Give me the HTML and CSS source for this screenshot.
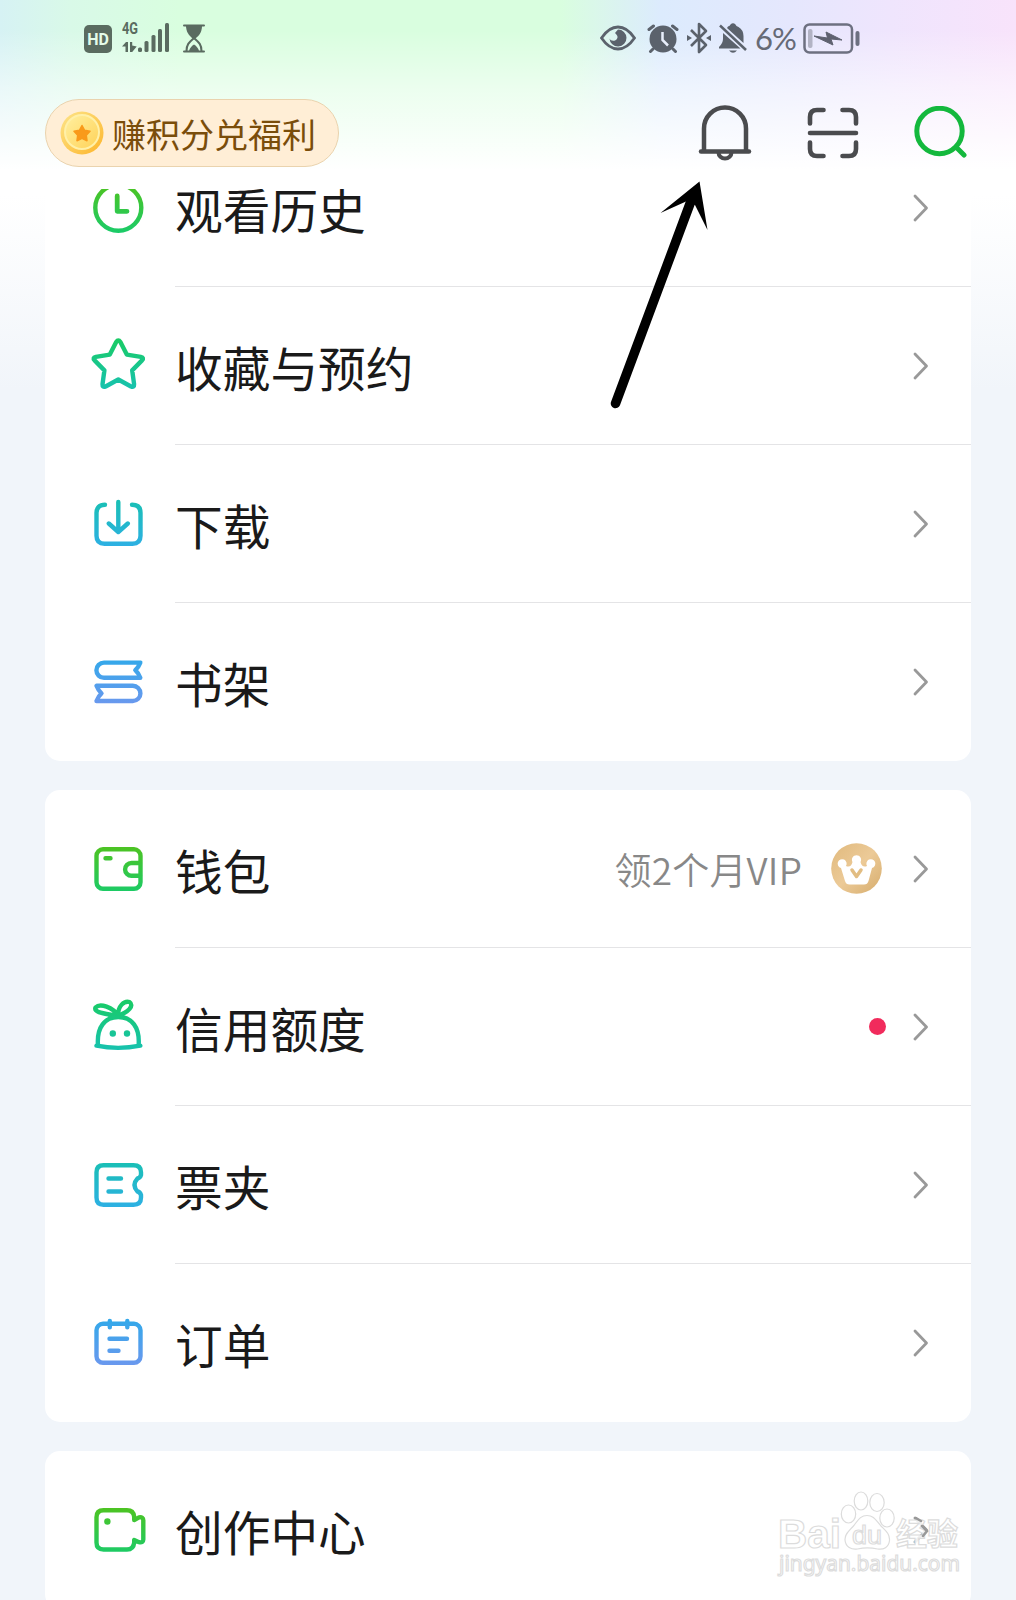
FILE: index.html
```html
<!DOCTYPE html>
<html lang="zh-CN">
<head>
<meta charset="utf-8">
<title>我的</title>
<link rel="stylesheet" href="styles.css">
</head>
<body>
<svg class="defs" width="0" height="0" aria-hidden="true">
  <defs>
    <linearGradient id="green" gradientUnits="userSpaceOnUse" x1="0" y1="6" x2="0" y2="54"><stop offset="0" stop-color="#4fc31f"/><stop offset="1" stop-color="#1bcb68"/></linearGradient>
    <linearGradient id="teal" gradientUnits="userSpaceOnUse" x1="0" y1="4" x2="0" y2="52"><stop offset="0" stop-color="#19cb66"/><stop offset="1" stop-color="#17c2ad"/></linearGradient>
    <linearGradient id="cyan" gradientUnits="userSpaceOnUse" x1="0" y1="8" x2="0" y2="52"><stop offset="0" stop-color="#1abfb6"/><stop offset="1" stop-color="#2db0e3"/></linearGradient>
    <linearGradient id="blue" gradientUnits="userSpaceOnUse" x1="0" y1="8" x2="0" y2="52"><stop offset="0" stop-color="#34a8ea"/><stop offset="1" stop-color="#6a98ee"/></linearGradient>
    <linearGradient id="gold" x1="0" y1="0" x2="1" y2="1"><stop offset="0" stop-color="#e0b97d"/><stop offset=".5" stop-color="#ecca97"/><stop offset="1" stop-color="#d6ac6c"/></linearGradient>
    <linearGradient id="coin" x1="0" y1="0" x2="1" y2="1"><stop offset="0" stop-color="#fde58a"/><stop offset="1" stop-color="#fdb52a"/></linearGradient>
    <linearGradient id="coin-face" x1="0" y1="0" x2="1" y2="1"><stop offset="0" stop-color="#fff0a0"/><stop offset="1" stop-color="#ffd257"/></linearGradient>
    <symbol id="chevron" viewBox="0 0 16 28"><path d="M2 2 13.500 14 2 26" fill="none" stroke="#999" stroke-width="2.800" stroke-linecap="round" stroke-linejoin="round"/></symbol>
  </defs>
</svg>

<header class="header">
  <div class="status">
    <div class="status-group status-left">
      <span class="hd">HD</span>
      <span class="network">
        <span class="network-type">4G</span>
        <svg width="48" height="30" viewBox="0 0 48 30"><g fill="#5a6b60"><path d="M0 23.500l4-4.500h2v10H3.500v-5.500zM8 19h2.200v3.500l4.500 1-4.500 5.500H8z"/><rect x="16" y="24.500" width="4" height="4.500" rx="1.500"/><rect x="22.500" y="18" width="4" height="11" rx="1.500"/><rect x="29.500" y="12" width="4" height="17" rx="1.500"/><rect x="36" y="6" width="4" height="23" rx="1.500"/><rect x="43" y="0" width="4" height="29" rx="1.500"/></g></svg>
      </span>
      <svg class="hourglass" width="22" height="29" viewBox="0 0 22 29"><path d="M1 1.500h20M1 27.500h20" stroke="#5a6b60" stroke-width="2" stroke-linecap="round"/><path d="M3 1.500h16c0 7-3 10-6.500 13h-3C6 11.500 3 8 3 1.500z" fill="#5a6b60"/><path d="M3.500 27c0-7 3-9 7.500-13 4.500 4 7.500 6 7.500 13" fill="none" stroke="#5a6b60" stroke-width="2"/><path d="M6 27q1-4 5-6.500 4 2.500 5 6.500z" fill="#5a6b60"/></svg>
    </div>
    <div class="status-group status-right">
      <svg class="s-eye" width="36" height="26" viewBox="0 0 36 26"><path d="M1.500 13Q9 2 18 2t16.500 11Q27 24 18 24T1.500 13z" fill="none" stroke="#5b626c" stroke-width="2.800"/><path d="M18 4.500A8.500 8.500 0 1 1 9.500 13.500c1 2.500 5 3 7 1 2.200-2.500.5-4.500-1.500-6.500z" fill="#5b626c"/></svg>
      <svg class="s-alarm" width="32" height="29" viewBox="0 0 32 29"><circle cx="16" cy="15" r="13.500" fill="#5b626c"/><path d="M2 5.500 6.500 2M30 5.500 25.500 2M6 25l-2.500 2.500M26 25l2.500 2.500" stroke="#5b626c" stroke-width="3" stroke-linecap="round"/><path d="M15.500 8v8l5.500 5.500" fill="none" stroke="#e8eefb" stroke-width="2.500"/></svg>
      <svg class="s-bt" width="24" height="32" viewBox="0 0 24 32"><path d="M4 8l15 15-7 7V2l7 7L4 24" fill="none" stroke="#5b626c" stroke-width="2.600" stroke-linejoin="round"/><path d="M0 13l5 3-5 3zM24 13l-5 3 5 3z" fill="#5b626c"/></svg>
      <svg class="s-mute" width="28" height="30" viewBox="0 0 28 30"><path d="M9 3.500q2-.5 2.500-2 2.500-2.500 5 0 .5 1.500 3 2.500 5 3 5 9v7L8 5zM4 10l17.500 15.500H0V24q4-4 4-8zM10 27.500h8q-4 4.500-8 0z" fill="#5b626c"/><path d="M1 2.500 27 27" stroke="#5b626c" stroke-width="2.500"/></svg>
      <span class="percent">6%</span>
      <svg class="s-battery" width="57" height="31" viewBox="0 0 57 31"><rect x="1.500" y="1.500" width="47.500" height="28" rx="5" fill="none" stroke="#6d7080" stroke-width="2.500"/><rect x="5" y="6" width="4.500" height="19" rx="2" fill="#b2b3c4"/><path d="M11 13l13.500 2L23 9l16 8-11-1 2 6z" fill="#5f6270" stroke="#5f6270"/><rect x="52.500" y="8" width="4" height="15" rx="2" fill="#6d7080"/></svg>
    </div>
  </div>
  <div class="toolbar">
    <div class="points">
      <svg width="44" height="44" viewBox="0 0 44 44"><circle cx="22" cy="22" r="21.500" fill="url(#coin)"/><circle cx="22" cy="21" r="17" fill="url(#coin-face)" stroke="#fff0a8" stroke-width="2"/><path d="M22 14.500l2.600 4.800 5.400 1-3.700 4 .7 5.400-5-2.300-5 2.300.7-5.400-3.700-4 5.400-1z" fill="#f99a1a" stroke="#f99a1a" stroke-width="1.500" stroke-linejoin="round"/></svg>
      <span>赚积分兑福利</span>
    </div>
    <div class="actions">
      <svg width="54" height="56" viewBox="0 0 54 56" fill="none" stroke="#4a4b4e" stroke-linecap="round"><path d="M6 45V23.500a21 21 0 0 1 42 0V45" stroke-width="4.500"/><path d="M3 46.500h48" stroke-width="4.500"/><path d="M20.500 47.500a6.500 6 0 0 0 13 0" stroke-width="4" stroke-linecap="butt"/></svg>
      <svg width="52" height="52" viewBox="0 0 52 52" fill="none" stroke="#4a4b4e" stroke-width="4.600" stroke-linecap="round"><path d="M3 16.500V10q0-7 7-7h6.500M35.500 3H42q7 0 7 7v6.500M49 35.500V42q0 7-7 7h-6.500M16.500 49H10q-7 0-7-7v-6.500M3 26h46"/></svg>
      <svg width="53" height="54" viewBox="0 0 53 54" fill="none" stroke="#14b83d" stroke-width="5" stroke-linecap="round"><circle cx="25.500" cy="25" r="22.700"/><path d="M43.500 42.500 50 49"/></svg>
    </div>
  </div>
</header>

<main class="content">
  <section class="card">
    <div class="row">
      <svg class="icon" viewBox="0 0 60 60" stroke="url(#green)"><circle cx="30.300" cy="29.800" r="23"/><path d="M29.200 18v15.300h9.800" stroke-width="4.800"/></svg>
      <div class="cell"><span class="label">观看历史</span><svg class="arrow"><use href="#chevron"/></svg></div>
    </div>
    <div class="row">
      <svg class="icon" viewBox="0 0 60 60" stroke="url(#teal)"><path d="M28.200 6q2.100-3 4.200 0l6.400 12.600 14 2.200q3.600.8 1.200 3.600l-9.800 10 1.900 13.800q.2 3.600-3.100 2.300L30.300 43.500 17.600 50.500q-3.300 1.300-3.100-2.300l1.900-13.800-9.800-10q-2.400-2.800 1.200-3.600l14-2.200z"/></svg>
      <div class="cell"><span class="label">收藏与预约</span><svg class="arrow"><use href="#chevron"/></svg></div>
    </div>
    <div class="row">
      <svg class="icon" viewBox="0 0 60 60" stroke="url(#cyan)"><path d="M17 10.800q-8.500 0-8.500 8v23q0 8 8 8h28q8 0 8-8v-23q0-8-8.500-8M30.300 8v29M20.800 29.500l9.500 8.500 9.500-8.500"/></svg>
      <div class="cell"><span class="label">下载</span><svg class="arrow"><use href="#chevron"/></svg></div>
    </div>
    <div class="row">
      <svg class="icon" viewBox="0 0 60 60" stroke="url(#blue)"><path d="M52.300 10.600H16a7.600 7.600 0 0 0 0 15.200h36.300q-2-5-5-7.600 3-2.600 5-7.600zM8.500 33.800h36.300a7.600 7.600 0 0 1 0 15.200H8.500q2-5 5-7.600-3-2.600-5-7.600z"/></svg>
      <div class="cell"><span class="label">书架</span><svg class="arrow"><use href="#chevron"/></svg></div>
    </div>
  </section>

  <section class="card">
    <div class="row">
      <svg class="icon" viewBox="0 0 60 60" stroke="url(#green)"><rect x="8.500" y="10.300" width="44" height="39.500" rx="6.500"/><path d="M52 24h-8.500a6.400 6.400 0 0 0 0 12.800H52M17.500 19.300h5"/></svg>
      <div class="cell"><span class="label">钱包</span><span class="hint">领2个月VIP</span>
        <svg class="crown" width="51" height="51" viewBox="0 0 51 51"><circle cx="25.500" cy="25.500" r="25.300" fill="url(#gold)"/><path d="M15 23q5 2 6.500-4a4.600 4.600 0 1 1 8 0q1.500 6 6.500 4a4.500 4.500 0 1 1 5 2L37.500 38q-1 3.500-4.500 3.500H18.500q-3.500 0-4.500-3.500L10 25a4.500 4.500 0 1 1 5-2z" fill="#fff"/><path d="M21 27l4.500 6.500L30 27" fill="none" stroke="#e2bd82" stroke-width="3.500" stroke-linecap="round" stroke-linejoin="round"/></svg>
        <svg class="arrow"><use href="#chevron"/></svg></div>
    </div>
    <div class="row">
      <svg class="icon" viewBox="0 0 60 60" stroke="url(#teal)"><path d="M10 48.500C8.500 30 17 20 30.300 20s21.800 10 20.300 28.500M8.500 48.700Q30 53 52.300 48.700M30 19C25 10 12 6 7.500 10.500 5.500 16 17 16.500 30 19zM30 18.500C30 9 36 3.500 41.500 5c5 3.500-1 10.500-11.500 13.500z"/><g fill="url(#teal)" stroke="none"><circle cx="24.800" cy="36.500" r="3.200"/><circle cx="39" cy="36.500" r="3.200"/></g></svg>
      <div class="cell"><span class="label">信用额度</span><span class="dot"></span><svg class="arrow"><use href="#chevron"/></svg></div>
    </div>
    <div class="row">
      <svg class="icon" viewBox="0 0 60 60" stroke="url(#cyan)"><path d="M15.500 10.300h30q7.500 0 7.500 7V20q-1 3-3.500 3.500-6 6.500 0 13 2.500.5 3.500 3.500v2.500q0 7.200-7.500 7.200h-30q-7 0-7-7.200V17.300q0-7 7-7zM20.500 23.500H33M20.500 36.500H33"/></svg>
      <div class="cell"><span class="label">票夹</span><svg class="arrow"><use href="#chevron"/></svg></div>
    </div>
    <div class="row">
      <svg class="icon" viewBox="0 0 60 60" stroke="url(#blue)"><rect x="8.500" y="10.800" width="44" height="39" rx="6.500"/><path d="M21.800 8v6.300M39.300 8v6.300M21.500 25.700H39M21.500 37.700h9"/></svg>
      <div class="cell"><span class="label">订单</span><svg class="arrow"><use href="#chevron"/></svg></div>
    </div>
  </section>

  <section class="card">
    <div class="row">
      <svg class="icon" viewBox="0 0 60 60" stroke="url(#green)"><path d="M15.500 10.300H39q6.500 0 7.200 6.500v3.300L51 17.300q4.300-.7 4.300 3V39.500q0 3.500-4.300 2.700l-4.800-2.200v2.500q-.7 7-7.200 7H15.500q-7 0-7-7V17.300q0-7 7-7z"/><circle cx="19.400" cy="21.500" r="3.200" fill="url(#green)" stroke="none"/></svg>
      <div class="cell"><span class="label">创作中心</span><svg class="arrow"><use href="#chevron"/></svg></div>
    </div>
  </section>
</main>

<svg class="pointer-arrow" width="150" height="260" viewBox="0 0 150 260"><path d="M25.500 243.500 101 41" stroke="#000" stroke-width="9.500" stroke-linecap="round"/><path d="M109.500 21.500 117.500 70 105 45 96 41.500 70.500 53z"/></svg>

<svg class="watermark" width="200" height="100" viewBox="0 0 200 100">
  <g fill="#fff" fill-opacity=".85" stroke="#dcdcdc" stroke-width="1.200">
    <ellipse cx="78.500" cy="34" rx="7.200" ry="9"/><ellipse cx="91" cy="21" rx="6.800" ry="9"/><ellipse cx="107" cy="22.500" rx="7.200" ry="9"/><ellipse cx="117" cy="38" rx="7.200" ry="9"/>
    <path d="M97 35.500c7 0 9 5 14 10.500 5 5 9 8 8.500 14.500-.8 7-6 9.500-12 8.500-7-1.500-13-1.500-20 0-6 1-12-2-12.500-9-.3-6 4-9 8-13.500 5-6 7-11 14-11z"/>
    <text class="wm-latin" x="8" y="68" font-size="41" textLength="63" lengthAdjust="spacingAndGlyphs">Bai</text>
    <text class="wm-du" x="82" y="64" font-size="26" textLength="30" lengthAdjust="spacingAndGlyphs">du</text>
    <text class="wm-cjk" x="126" y="65" font-size="31">经验</text>
    <text class="wm-url" x="9" y="91" font-size="22" textLength="181" lengthAdjust="spacingAndGlyphs">jingyan.baidu.com</text>
  </g>
  <path d="M146 38l5 3M152 46l5 5-4 5" fill="none" stroke="#999" stroke-width="2.500" stroke-linecap="round"/>
</svg>
</body>
</html>
```

FILE: styles.css
```css
* { box-sizing: border-box; }

body {
  position: relative;
  display: flex;
  flex-direction: column;
  width: 1016px;
  height: 1600px;
  margin: 0;
  overflow: hidden;
  font-family: "Noto Sans CJK SC", sans-serif;
  color: #1a1a1a;
  background:
    linear-gradient(to bottom, rgba(255,255,255,0) 30px, rgba(255,255,255,.5) 90px, #fff 170px, #fff 195px, #f1f5fa 390px, #f1f5fa),
    linear-gradient(to right, #d6f2f4 0, #d9f9e8 70px, #d9fedf 180px, #d9fedf 560px, #dcebfd 660px, #e5e7fd 790px, #efe5fd 890px, #f8e3fb 1016px);
}

svg { display: block; flex: none; }
.defs { position: absolute; }

.header { height: 189px; flex: none; }

.status {
  display: flex;
  justify-content: space-between;
  height: 76px;
  padding: 0 156px 0 84px;
}
.status-group { display: flex; align-items: center; }
.hd {
  width: 28px;
  height: 28px;
  margin-top: 1px;
  border-radius: 5px;
  background: #5a6b60;
  color: #e4fbe9;
  font: bold 16px/29px Roboto, sans-serif;
  text-align: center;
}
.network { position: relative; margin-left: 10px; }
.network-type {
  position: absolute;
  top: -2px;
  left: 0;
  color: #5a6b60;
  font: bold 16px/16px Roboto, sans-serif;
  letter-spacing: 0;
  transform: scaleX(.8);
  transform-origin: left;
}
.hourglass { margin-left: 13px; }

.s-alarm { margin-left: 11px; }
.s-bt { margin-left: 8px; }
.s-mute { margin-left: 8px; }
.percent {
  width: 42px;
  margin-left: 8px;
  color: #666a76;
  font: 31px/36px Lato, sans-serif;
  letter-spacing: -1px;
  white-space: nowrap;
}
.s-battery { margin-left: 6px; }

.toolbar {
  display: flex;
  align-items: center;
  justify-content: space-between;
  padding: 23px 49px 0 45px;
}
.points {
  display: flex;
  align-items: center;
  gap: 8px;
  width: 294px;
  height: 68px;
  padding-left: 14px;
  border: 1px solid #ead3ae;
  border-radius: 34px;
  background: #ffeed6;
  color: #7a4d0a;
  font-size: 34px;
  line-height: 66px;
  white-space: nowrap;
}
.points span { padding-top: 1px; }
.actions { display: flex; align-items: center; gap: 55px; }

.content { flex: 1; min-height: 0; overflow: hidden; padding: 0 45px; }
.card {
  margin-bottom: 29px;
  border-radius: 15px;
  background: #fff;
}
.card:first-child { margin-top: -60px; }

.row {
  display: flex;
  align-items: center;
  gap: 27px;
  height: 158px;
  padding-left: 43px;
}
.icon {
  width: 60px;
  height: 60px;
  fill: none;
  stroke-width: 4.4px;
  stroke-linecap: round;
  stroke-linejoin: round;
}
.cell {
  display: flex;
  flex: 1;
  align-items: center;
  height: 100%;
  padding-right: 42px;
  border-bottom: 1px solid #e4e4e6;
}
.row:last-child .cell { border-bottom: 0; }
.label { flex: 1; padding-top: 2px; font-size: 47.700px; line-height: 70px; }
.hint { margin-right: 29px; color: #888; font-size: 37px; font-weight: 350; letter-spacing: .2px; }
.crown { margin-right: 31px; }
.dot { width: 17px; height: 17px; margin-right: 27px; border-radius: 50%; background: #f12b5c; }
.arrow { width: 16px; height: 28px; }

.pointer-arrow { position: absolute; left: 590px; top: 160px; }

.watermark { position: absolute; left: 770px; top: 1480px; }
.wm-latin { font-family: "Liberation Sans", sans-serif; font-weight: bold; }
.wm-du { font-family: "Liberation Sans", sans-serif; }
.wm-cjk { font-family: "Noto Sans CJK SC", sans-serif; font-weight: bold; }
.wm-url { font-family: "Noto Sans", sans-serif; }
```
